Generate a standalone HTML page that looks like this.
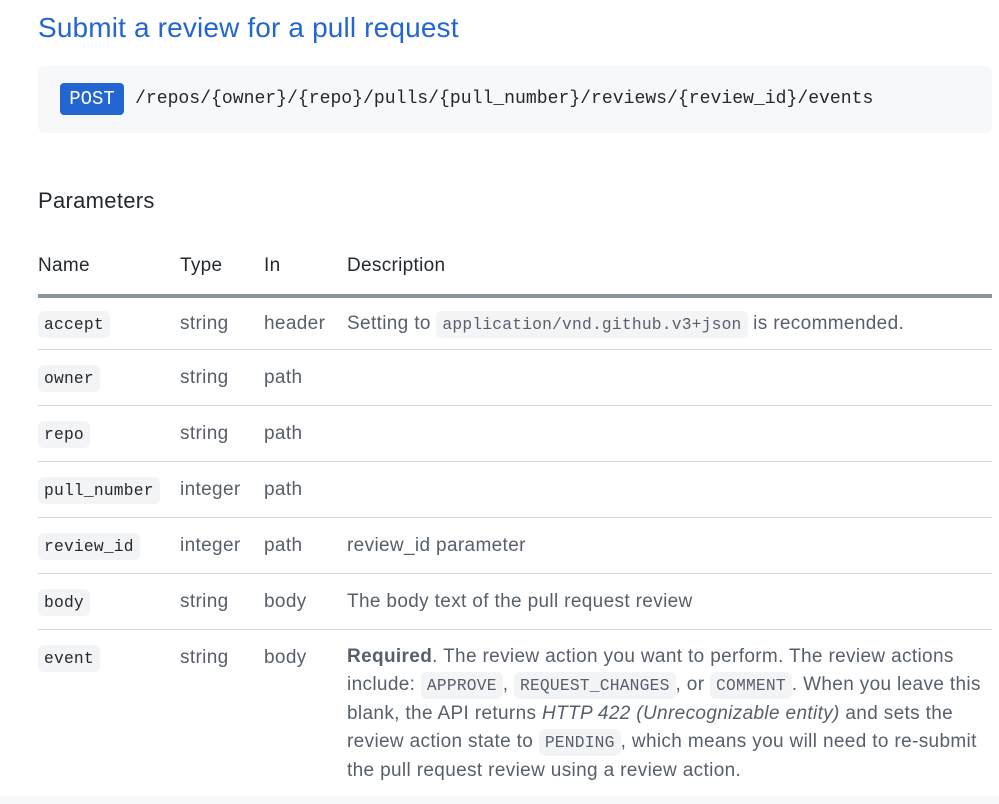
<!DOCTYPE html>
<html><head><meta charset="utf-8"><style>
*{margin:0;padding:0;box-sizing:border-box}
body{width:999px;height:804px;background:#fff;font-family:"Liberation Sans",sans-serif;color:#24292f;position:relative;overflow:hidden}
.a{position:absolute;white-space:nowrap}
h1{position:absolute;left:38px;top:12px;font-size:28px;font-weight:normal;color:#2366d1;letter-spacing:0.15px}
.box{position:absolute;left:38px;top:66px;width:954px;height:67px;background:#f6f8fa;border-radius:7px}
.post{position:absolute;left:60px;top:83px;width:64px;height:32px;background:#2366d1;color:#fff;border-radius:4px;font-family:"Liberation Mono",monospace;font-size:19px;line-height:33px;text-align:center}
.path{position:absolute;left:135px;top:89px;font-family:"Liberation Mono",monospace;font-size:18.1px;color:#24292f}
.row{position:absolute;left:38px;width:954px;height:56px;border-bottom:1px solid #d0d7de}
.c{position:absolute;top:0;line-height:55px;font-size:19px;letter-spacing:0.35px;color:#57606a;white-space:nowrap}
code{font-family:"Liberation Mono",monospace;font-size:16.3px;letter-spacing:0.2px;background:#f3f4f6;border-radius:6px;padding:4px 6px;color:#24292f}
.desc code{color:#57606a}
.n{left:0}.t{left:142px}.i{left:226px}.d{left:309px}
.h{position:absolute;top:255px;font-size:19px;letter-spacing:0.3px}
</style></head><body>
<h1>Submit a review for a pull request</h1>
<div class="box"></div>
<div class="post">POST</div>
<div class="path">/repos/{owner}/{repo}/pulls/{pull_number}/reviews/{review_id}/events</div>
<div class="a" style="left:38px;top:188px;font-size:22px;letter-spacing:0.3px">Parameters</div>
<div class="h" style="left:38px">Name</div>
<div class="h" style="left:180px">Type</div>
<div class="h" style="left:264px">In</div>
<div class="h" style="left:347px">Description</div>
<div class="a" style="left:38px;top:294px;width:954px;height:4px;background:#8c959f"></div>

<div class="row" style="top:298px;height:52px"><div class="c n" style="line-height:51px"><code>accept</code></div><div class="c t" style="line-height:51px">string</div><div class="c i" style="line-height:51px">header</div><div class="c d desc" style="line-height:51px">Setting to <code>application/vnd.github.v3+json</code> is recommended.</div></div>
<div class="row" style="top:350px"><div class="c n"><code>owner</code></div><div class="c t">string</div><div class="c i">path</div></div>
<div class="row" style="top:406px"><div class="c n"><code>repo</code></div><div class="c t">string</div><div class="c i">path</div></div>
<div class="row" style="top:462px"><div class="c n"><code>pull_number</code></div><div class="c t">integer</div><div class="c i">path</div></div>
<div class="row" style="top:518px"><div class="c n"><code>review_id</code></div><div class="c t">integer</div><div class="c i">path</div><div class="c d">review_id parameter</div></div>
<div class="row" style="top:574px"><div class="c n"><code>body</code></div><div class="c t">string</div><div class="c i">body</div><div class="c d">The body text of the pull request review</div></div>
<div class="row" style="top:630px;height:170px;border:none"><div class="c n"><code>event</code></div><div class="c t">string</div><div class="c i">body</div>
<div class="c d desc" style="top:13px;line-height:28px;white-space:normal;width:640px"><b style="color:#57606a">Required</b>. The review action you want to perform. The review actions include: <code>APPROVE</code>, <code>REQUEST_CHANGES</code>, or <code>COMMENT</code>. When you leave this blank, the API returns <i>HTTP 422 (Unrecognizable entity)</i> and sets the review action state to <code>PENDING</code>, which means you will need to re-submit the pull request review using a review action.</div></div>
<div class="a" style="left:0;top:796px;width:999px;height:8px;background:#f6f8fa"></div>
</body></html>
